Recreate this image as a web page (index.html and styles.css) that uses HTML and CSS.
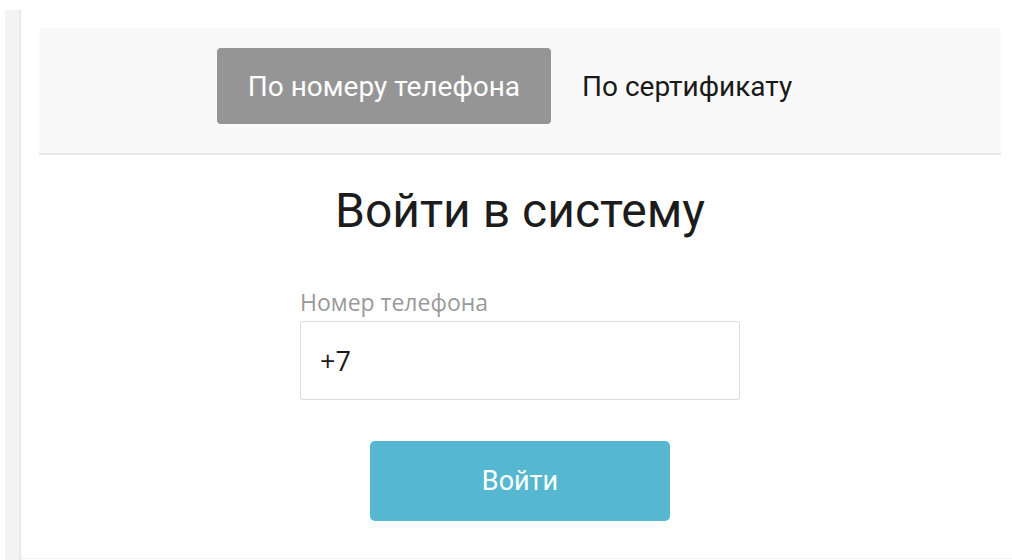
FILE: index.html
```html
<!DOCTYPE html>
<html lang="ru">
<head>
<meta charset="utf-8">
<title>Вход</title>
<link rel="stylesheet" href="styles.css">
</head>
<body>
<div class="page">
  <aside class="rail"></aside>
  <main class="panel">
    <nav class="tabs">
      <button class="tab tab-active" type="button">По номеру телефона</button>
      <button class="tab" type="button">По сертификату</button>
    </nav>
    <form class="login">
      <h1 class="login-title">Войти в систему</h1>
      <label class="field">
        <span class="field-label">Номер телефона</span>
        <input class="field-input" type="tel" value="+7">
      </label>
      <button class="submit" type="button">Войти</button>
    </form>
  </main>
</div>
</body>
</html>
```
FILE: styles.css
```css
* {
  box-sizing: border-box;
}

html, body {
  margin: 0;
  height: 100%;
  background: #ffffff;
  font-family: Roboto, "Liberation Sans", sans-serif;
  color: #222222;
}

.page {
  display: flex;
  height: 560px;
  padding-left: 5px;
}

/* narrow grey column on the left edge */
.rail {
  width: 16px;
  margin-top: 10px;
  background: #f3f3f3;
  border-right: 2px solid #e9e9e9;
}

.panel {
  flex: 1;
  display: flex;
  flex-direction: column;
  padding: 28px 11px 0 18px;
  height: 559px;
  border-bottom: 1px solid #f0f0f0;
}

/* tab switcher */
.tabs {
  display: flex;
  justify-content: center;
  align-items: flex-start;
  height: 127px;
  padding-top: 20px;
  background: #f9f9f9;
  border-bottom: 2px solid #e6e6e6;
}

.tab {
  height: 76px;
  padding: 0 31px;
  border: none;
  border-radius: 4px;
  background: transparent;
  font-family: Roboto, "Liberation Sans", sans-serif;
  font-size: 28px;
  color: #1a1a1a;
  cursor: pointer;
}

.tab-active {
  background: #959595;
  color: #ffffff;
}

/* login form */
.login {
  display: flex;
  flex-direction: column;
  align-items: center;
}

.login-title {
  margin: 27px 0 0;
  font-size: 48px;
  font-weight: 400;
  line-height: 58px;
  color: #1c1c1c;
}

.field {
  display: flex;
  flex-direction: column;
  width: 440px;
  margin-top: 48px;
}

.field-label {
  font-family: "Open Sans", sans-serif;
  font-size: 23px;
  line-height: 28px;
  color: #9a9a9a;
  margin-bottom: 5px;
}

.field-input {
  height: 79px;
  padding: 0 19px;
  border: 1px solid #dcdcdc;
  border-radius: 3px;
  font-family: "Open Sans", sans-serif;
  font-size: 27px;
  color: #1a1a1a;
  outline: none;
}

.submit {
  width: 300px;
  height: 80px;
  margin-top: 41px;
  border: none;
  border-radius: 5px;
  background: #55b8d0;
  color: #ffffff;
  font-family: Roboto, "Liberation Sans", sans-serif;
  font-size: 27px;
  cursor: pointer;
}
```
